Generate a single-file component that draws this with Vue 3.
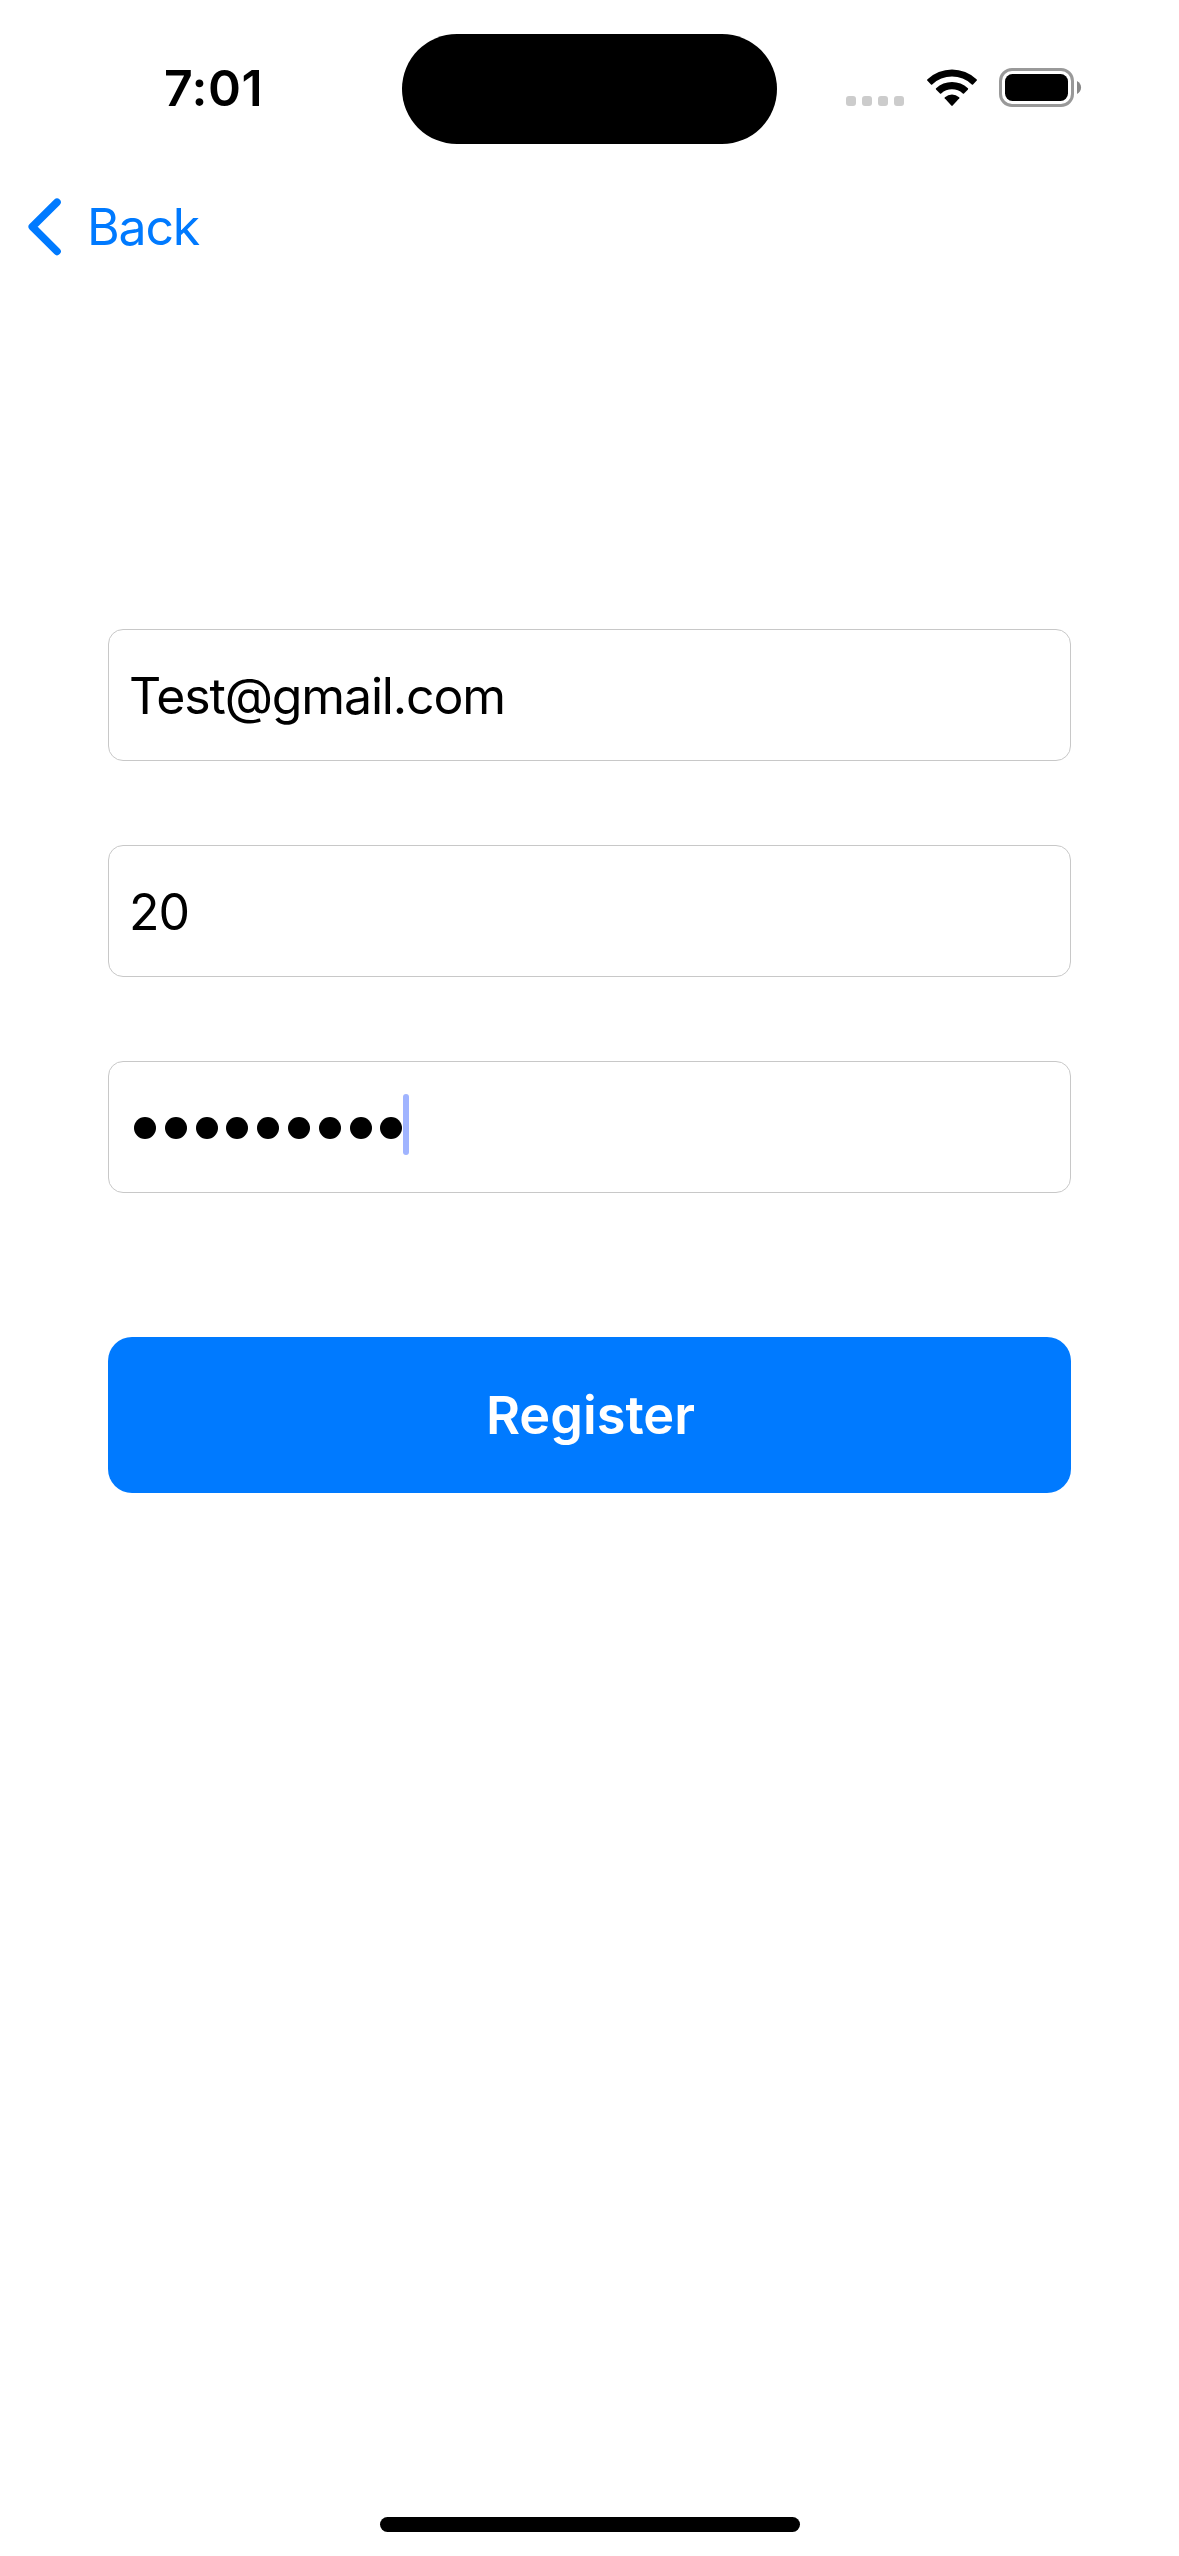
<script setup>
const signalDots = 4
const passwordLength = 9
</script>

<template>
  <div class="screen">
    <header class="status">
      <div class="clock"><span>7:01</span></div>
      <div class="island"></div>
      <div class="indicators">
        <div class="signal"><i v-for="n in signalDots" :key="n"></i></div>
        <svg class="wifi" width="50" height="38" viewBox="0 0 50 38">
          <path d="M0 11.2 Q0 10.6 .5 10.2 A35.5 35.5 0 0 1 49.5 10.2 Q50 10.6 50 11.2 L46 15.4 Q45.4 15.9 44.8 15.4 A29 29 0 0 0 5.2 15.4 Q4.6 15.9 4 15.4 Z" />
          <path d="M9 20.4 Q8.5 19.8 9.1 19.2 A23.3 23.3 0 0 1 40.9 19.2 Q41.5 19.8 41 20.4 L37 24.4 Q36.4 24.9 35.8 24.4 A16.4 16.4 0 0 0 14.2 24.4 Q13.6 24.9 13 24.4 Z" />
          <path d="M17.7 29.3 Q17.3 28.8 17.9 28.2 A11 11 0 0 1 32.1 28.2 Q32.7 28.8 32.3 29.3 L25.7 36.6 Q25 37.3 24.3 36.6 Z" />
        </svg>
        <svg class="battery" width="83" height="39" viewBox="0 0 83 39">
          <rect x="1.5" y="1.5" width="72" height="36" rx="11.5" fill="none" stroke="#999" stroke-width="3" />
          <rect x="6" y="6" width="63" height="27" rx="7.5" />
          <path d="M78 13 C83.4 15.5 83.4 23.5 78 26 Z" fill="#888" />
        </svg>
      </div>
    </header>

    <nav class="nav">
      <svg width="35" height="58" viewBox="0 0 35 58">
        <path d="M30 4.2 L5.3 28.8 L30 53.4" fill="none" stroke="#007aff" stroke-width="7.6" stroke-linecap="round" stroke-linejoin="round" />
      </svg>
      <span class="back">Back</span>
    </nav>

    <main class="form">
      <div class="field"><span class="email">Test@gmail.com</span></div>
      <div class="field"><span class="age">20</span></div>
      <div class="field password">
        <i v-for="n in passwordLength" :key="n"></i>
        <b class="caret"></b>
      </div>
      <button class="register"><span>Register</span></button>
    </main>

    <div class="home"></div>
  </div>
</template>

<style>
body {
  margin: 0;
  background: #fff;
}
</style>

<style scoped>
.screen {
  box-sizing: border-box;
  width: 1179px;
  height: 2556px;
  display: flex;
  flex-direction: column;
  overflow: hidden;
  background: #fff;
  color: #000;
  font-family: Inter, "Liberation Sans", sans-serif;
  font-size: 50px;
  line-height: 60px;
  white-space: nowrap;
}
.status {
  display: flex;
  height: 110px;
  padding-top: 34px;
}
.clock {
  box-sizing: border-box;
  width: 402px;
  padding: 24px 0 0 164px;
  font-weight: 600;
}
.clock span {
  letter-spacing: 0.5px;
}
.island {
  width: 375px;
  height: 110px;
  border-radius: 55px;
  background: #000;
}
.indicators {
  display: flex;
  align-items: flex-start;
  padding: 34px 0 0 69px;
}
.signal {
  display: flex;
  gap: 6px;
  margin: 28px 23px 0 0;
}
.signal i {
  width: 10px;
  height: 10px;
  border-radius: 3px;
  background: #ccc;
}
.wifi {
  margin: 1px 22px 0 0;
}
.nav {
  display: flex;
  align-items: center;
  height: 58px;
  margin: 54px 0 0 27px;
  color: #007aff;
}
.back {
  margin-left: 25px;
  letter-spacing: -1.2px;
}
.form {
  display: flex;
  flex-direction: column;
  gap: 84px;
  margin: 373px 108px 0;
}
.field {
  box-sizing: border-box;
  display: flex;
  align-items: center;
  height: 132px;
  padding: 2px 0 0 20px;
  border: 1px solid #c8c8c8;
  border-radius: 15px;
}
.email {
  letter-spacing: -1.15px;
}
.age {
  letter-spacing: -1px;
}
.password {
  gap: 8.8px;
  padding: 2px 0 0 25px;
}
.password i {
  width: 22px;
  height: 22px;
  border-radius: 50%;
  background: #000;
}
.password .caret {
  width: 6px;
  height: 61px;
  margin: -7px 0 0 -7.8px;
  border-radius: 3px;
  background: #a0b4ff;
}
.register {
  display: flex;
  align-items: center;
  justify-content: center;
  height: 156px;
  margin-top: 60px;
  padding: 0 0 0 2px;
  border: 0;
  border-radius: 24px;
  background: #007aff;
  color: #fff;
  font: 600 52.3px/60px Inter, "Liberation Sans", sans-serif;
}
.home {
  width: 420px;
  height: 15px;
  margin: auto 0 24px 380px;
  border-radius: 8px;
  background: #000;
}
</style>
